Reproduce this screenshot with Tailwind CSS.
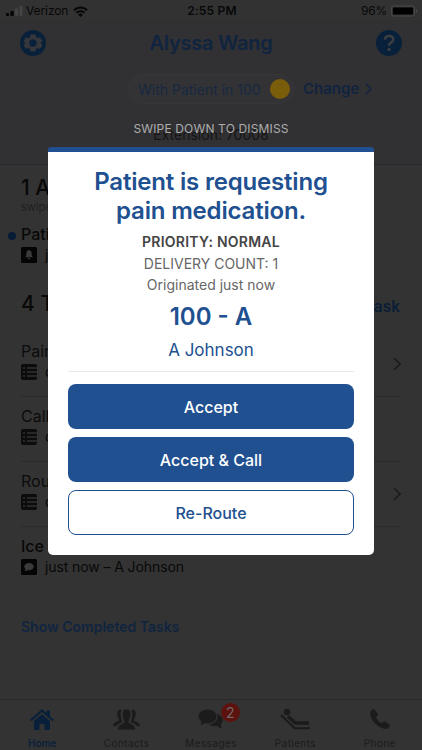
<!DOCTYPE html>
<html lang="en">
<head>
    <meta charset="UTF-8">
    <title>Tasks</title>
    <meta name="viewport" content="width=device-width, initial-scale=1.0">
    <script src="https://cdn.jsdelivr.net/npm/@tailwindcss/browser@4"></script>
</head>

<body class="bg-[#333333] font-['Inter',sans-serif] text-[#080808]">
<!-- Shared icons -->
<svg class="hidden">
    <symbol id="list" viewBox="0 0 16 16">
        <rect width="16" height="16" rx="2" fill="#0c0c0c"/>
        <path d="M2 4h2M6 4h10M2 8h2M6 8h10M2 12h2M6 12h10" stroke="#303030" stroke-width="1.3"/>
    </symbol>
    <symbol id="chevron" viewBox="0 0 8 14">
        <path d="M1 1l6 6-6 6" fill="none" stroke="currentColor" stroke-width="1.7"/>
    </symbol>
</svg>

<div class="relative w-[422px] h-[750px] overflow-hidden flex flex-col whitespace-nowrap">
    <!-- Status bar -->
    <div class="h-5 shrink-0 grid grid-cols-3 items-center pl-1.5 pr-1 pt-0.5 text-xs bg-[#323232]">
        <div class="flex items-center gap-[3px]">
            <svg class="w-[17px] h-3" viewBox="0 0 17 12">
                <rect y="8" width="3" height="3" rx=".8" fill="#050505"/>
                <rect x="4.3" y="6" width="3.4" height="5" rx=".8" fill="#050505"/>
                <rect x="9" y="3.5" width="3" height="7.5" rx=".8" fill="#444"/>
                <rect x="13.4" y="1" width="3" height="10" rx=".8" fill="#444"/>
            </svg>
            <span class="text-[12px] tracking-[-0.1px]">Verizon</span>
            <svg class="w-[15px] h-[11px] ml-0.5" viewBox="0 0 15 11" fill="none" stroke="#050505" stroke-width="2">
                <path d="M1 4.2a9.2 9.2 0 0 1 13 0M3.5 6.8a5.7 5.7 0 0 1 8 0"/>
                <path d="M7.500 11L5.200 8.700a3.300 3.300 0 0 1 4.600 0z" fill="#050505" stroke="none"/>
            </svg>
        </div>
        <div class="text-center font-semibold tracking-[0.2px]">2:55 PM</div>
        <div class="flex items-center justify-end gap-1">
            <span class="tracking-[-0.2px]">96%</span>
            <svg class="w-[27px] h-3" viewBox="0 0 27 12">
                <rect x=".5" y="1" width="23" height="10" rx="2" fill="none" stroke="#484848"/>
                <rect x="2" y="2.500" width="20" height="7" rx="1" fill="#000"/>
                <path d="M25 4v4q1.500-.5 1.500-2T25 4z" fill="#484848"/>
            </svg>
        </div>
    </div>

    <!-- Header -->
    <header class="h-[145px] shrink-0 bg-[#313134] border-b border-[#27272c] text-[#102440]">
        <div class="flex items-center justify-between h-[46px] pl-5 pr-5">
            <svg class="w-[26px] h-[26px]" viewBox="0 0 26 26">
                <circle cx="13" cy="13" r="13" fill="#08203a"/>
                <path d="M11 5h4l.7 2.6 1.7 1 2.6-.8 2 3.4-1.9 1.8 1.9 1.9-2 3.4-2.6-.8-1.7 1L15 21h-4l-.7-2.5-1.7-1-2.6.8-2-3.4L5.900 13 4 11.200l2-3.400 2.600.800 1.700-1z" fill="#35373b" stroke="#35373b" stroke-linejoin="round"/>
                <circle cx="13" cy="13" r="3.700" fill="#08203a"/>
            </svg>
            <h1 class="text-[20px] font-semibold tracking-[-0.25px]">Alyssa Wang</h1>
            <svg class="w-[26px] h-[26px]" viewBox="0 0 26 26">
                <circle cx="13" cy="13" r="13" fill="#08203a"/>
                <path d="M8.900 9.700c.2-2.500 1.900-3.700 4.200-3.700 2.500 0 4.100 1.400 4.100 3.400 0 3.200-4.100 3.100-4.100 6.300" fill="none" stroke="#3c3e42" stroke-width="2.500"/>
                <circle cx="13.100" cy="19.400" r="1.700" fill="#3c3e42"/>
            </svg>
        </div>
        <div class="flex items-center pl-[128px] pt-2">
            <div class="flex items-center justify-between w-[166px] h-[30px] rounded-full border border-[#37373b] bg-[#333336] pl-[9px] pr-[3px]">
                <span class="text-[14px] text-[#172840]">With Patient in 100</span>
                <span class="size-5 rounded-full bg-[#7a5d0b]"></span>
            </div>
            <span class="ml-[9px] text-[15px] font-semibold">Change</span>
            <svg class="ml-[6px] w-[7px] h-3"><use href="#chevron"/></svg>
        </div>
        <p class="mt-[19px] text-center text-[14px] leading-[23px] text-[#151515]">Extension: 70008</p>
    </header>

    <!-- Task list -->
    <main class="flex-1 px-[21px]">
        <h2 class="pt-[9px] text-[21px] leading-[27px] font-medium">1 Alert</h2>
        <p class="text-[11px] leading-3 text-[#202020]">swipe</p>
        <div class="relative h-[73px] pt-[11px]">
            <span class="absolute -left-[13px] top-[19px] size-2 rounded-full bg-[#071c36]"></span>
            <p class="text-base leading-5 font-medium">Patient</p>
            <div class="flex items-center gap-2 mt-[2px] text-[14px] leading-[18px]">
                <svg class="size-4" viewBox="0 0 16 16">
                    <rect width="16" height="16" rx="1.500" fill="#050505"/>
                    <path d="M8 3c2 .3 2.600 1.800 2.600 3.600 0 2 .5 2.700 1.400 3.700H4c.9-1 1.400-1.700 1.400-3.700C5.400 4.800 6 3.300 8 3zM6.800 11h2.400q-.2 1.400-1.200 1.400T6.800 11z" fill="#3a3a3a"/>
                </svg>
                <span>just now</span>
            </div>
        </div>
        <div class="flex items-center justify-between h-[36px]">
            <h2 class="text-[21px] font-medium">4 Tasks</h2>
            <span class="pt-1.5 pr-px text-[15.500px] font-semibold text-[#0a1d36]">Add Task</span>
        </div>
        <div class="flex flex-col mt-[10px]">
            <div class="flex items-center justify-between h-[65px] pb-[6px] border-b border-[#2b2b2b]">
                <div>
                    <p class="text-base leading-[22px] text-[#0b0b0b]">Pain</p>
                    <div class="flex items-center gap-2 text-[14px] leading-5"><svg class="size-4"><use href="#list"/></svg>due</div>
                </div>
                <svg class="mt-[6px] w-2 h-3.5 text-[#1c1c1c]"><use href="#chevron"/></svg>
            </div>
            <div class="flex items-center justify-between h-[65px] pb-[6px] border-b border-[#2b2b2b]">
                <div>
                    <p class="text-base leading-[22px] text-[#0b0b0b]">Call</p>
                    <div class="flex items-center gap-2 text-[14px] leading-5"><svg class="size-4"><use href="#list"/></svg>due</div>
                </div>
            </div>
            <div class="flex items-center justify-between h-[65px] pb-[6px] border-b border-[#2b2b2b]">
                <div>
                    <p class="text-base leading-[22px] text-[#0b0b0b]">Round</p>
                    <div class="flex items-center gap-2 text-[14px] leading-5"><svg class="size-4"><use href="#list"/></svg>due</div>
                </div>
                <svg class="mt-[6px] w-2 h-3.5 text-[#1c1c1c]"><use href="#chevron"/></svg>
            </div>
            <div class="flex flex-col justify-center h-[65px] pb-[7px]">
                <p class="text-base leading-[22px] font-medium">Ice</p>
                <div class="flex items-center gap-2 text-[14px] leading-5 tracking-[-0.1px]">
                    <svg class="size-4" viewBox="0 0 16 16">
                        <rect width="16" height="16" rx="1.500" fill="#050505"/>
                        <ellipse cx="8" cy="7.600" rx="4.700" ry="3.700" fill="#3a3a3a"/>
                        <path d="M5 9l-1.500 3.200L7.500 11z" fill="#3a3a3a"/>
                    </svg>
                    just now – A Johnson
                </div>
            </div>
        </div>
        <p class="mt-[25px] text-[14px] leading-5 font-semibold text-[#102440]">Show Completed Tasks</p>
    </main>

    <!-- Tab bar -->
    <nav class="h-[51px] shrink-0 grid grid-cols-5 border-t border-[#292929] text-[10px] leading-3 text-[#1b1b1b] tracking-[0.4px]">
        <div class="flex flex-col items-center pt-2 gap-[7px] text-[#08203a] font-semibold tracking-normal">
            <svg class="w-6 h-[22px]" viewBox="0 0 24 22" fill="currentColor">
                <path d="M12 1l4.500 4V2.500H20v5.700l4 3.500-1.500 1.600L12 4 1.500 13.300 0 11.700z"/>
                <path d="M12 6l8 7v9h-5.500v-6h-5v6H4v-9z"/>
            </svg>
            <span>Home</span>
        </div>
        <div class="flex flex-col items-center pt-2 gap-[7px]">
            <svg class="w-[27px] h-[22px]" viewBox="0 0 27 22" fill="currentColor">
                <path d="M8.500 2C5 1 4 4 4.400 7.200c.2 1.800.8 2.800 1.600 4v1.500C3 14 .5 14.600 0 18h3.500c1-2.500 4-2.700 6-4C7.500 10 7 5 8.500 2zM18.500 2c3.500-1 4.500 2 4.100 5.200-.2 1.800-.8 2.800-1.600 4v1.500c3 1.300 5.500 1.900 6 5.300h-3.500c-1-2.500-4-2.700-6-4C19.500 10 20 5 18.500 2z"/>
                <path d="M13.500 1c3 0 4.500 2.200 4.300 5.500-.1 3-1 4.500-1.900 5.800v2.200c3 1.700 6.200 2.100 6.600 7.500h-18c.4-5.400 3.600-5.800 6.600-7.500v-2.200c-.9-1.300-1.800-2.800-1.900-5.800C9 3.200 10.500 1 13.500 1z" stroke="#333333" stroke-width=".8"/>
            </svg>
            <span>Contacts</span>
        </div>
        <div class="relative flex flex-col items-center pt-2 gap-[7px]">
            <svg class="w-[27px] h-[22px]" viewBox="0 0 27 22" fill="currentColor">
                <path d="M20 6c3.500 1 5.800 3.300 5.800 6.200q0 2.500-2 4.300 0 1.800 1.300 4-3-.4-4.600-2.500-5 .8-8.500-1.500z"/>
                <path d="M10.500 1C16 1 20 4.200 20 8.500S16 16 10.500 16q-1.400 0-2.700-.3Q5.500 18 2.500 18q1.500-1.800 1.400-4Q1 11.600 1 8.500C1 4.200 5 1 10.500 1z" stroke="#333333" stroke-width="1.200"/>
            </svg>
            <span>Messages</span>
            <span class="absolute left-[52px] top-[3px] size-[19px] rounded-full bg-[#5c130f] text-[#706866] text-sm leading-[19px] text-center tracking-normal">2</span>
        </div>
        <div class="flex flex-col items-center pt-2 gap-[7px]">
            <svg class="w-[30px] h-[22px]" viewBox="0 0 30 22" fill="none" stroke="currentColor">
                <circle cx="7" cy="4" r="3.200" fill="currentColor" stroke="none"/>
                <path d="M8 8.500l7.500 6.500h13.500" stroke-width="3.500"/>
                <path d="M1 7L14.500 20.300H30" stroke-width="2"/>
            </svg>
            <span>Patients</span>
        </div>
        <div class="flex flex-col items-center pt-2 gap-[7px]">
            <svg class="w-5 h-[22px]" viewBox="0 0 20 22" fill="currentColor">
                <path d="M4.500 1.500L7.800 6.200q.4.700-.2 1.400L6 9.500c1 2.500 3.300 4.700 5.800 5.800l1.900-1.600q.7-.6 1.400-.1l4.300 2.900q.8.600.4 1.500c-1.100 2.200-3.300 3.300-5.300 2.800C7.500 19.500 1.400 13 .3 6.600 0 4.400 1 2.200 3 1.100q.9-.4 1.500.4z"/>
            </svg>
            <span>Phone</span>
        </div>
    </nav>

    <!-- Alert dialog -->
    <div class="absolute inset-x-12 top-[121px] w-[326px] text-center">
        <p class="h-[26px] text-xs leading-4 tracking-[0.15px] text-[#adadad]">SWIPE DOWN TO DISMISS</p>
        <div class="h-[408px] rounded-[5px] rounded-t-[3px] border-t-[5px] border-[#205090] bg-white px-5 text-[#205090]">
            <h2 class="pt-[15px] text-2xl leading-[29px] font-semibold tracking-[-0.18px]">Patient is requesting<br>pain medication.</h2>
            <p class="mt-[6px] text-sm leading-[22px] font-semibold tracking-[0.25px] text-[#444444]">PRIORITY: NORMAL</p>
            <p class="text-sm leading-[21px] text-[#666666]">DELIVERY COUNT: 1</p>
            <p class="text-sm leading-[22px] text-[#666666]">Originated just now</p>
            <p class="mt-[6px] text-2xl leading-[30px] font-semibold">100 - A</p>
            <p class="mt-[5px] text-[17px] leading-[26px]">A Johnson</p>
            <div class="mt-[8px] border-t border-[#e8e8e8] pt-[12px] flex flex-col gap-2 text-[16px] font-medium">
                <button class="h-[45px] rounded-lg bg-[#205090] text-white">Accept</button>
                <button class="h-[45px] rounded-lg bg-[#205090] text-white">Accept &amp; Call</button>
                <button class="h-[45px] rounded-lg border border-[#205090]">Re-Route</button>
            </div>
        </div>
    </div>
</div>
</body>
</html>
